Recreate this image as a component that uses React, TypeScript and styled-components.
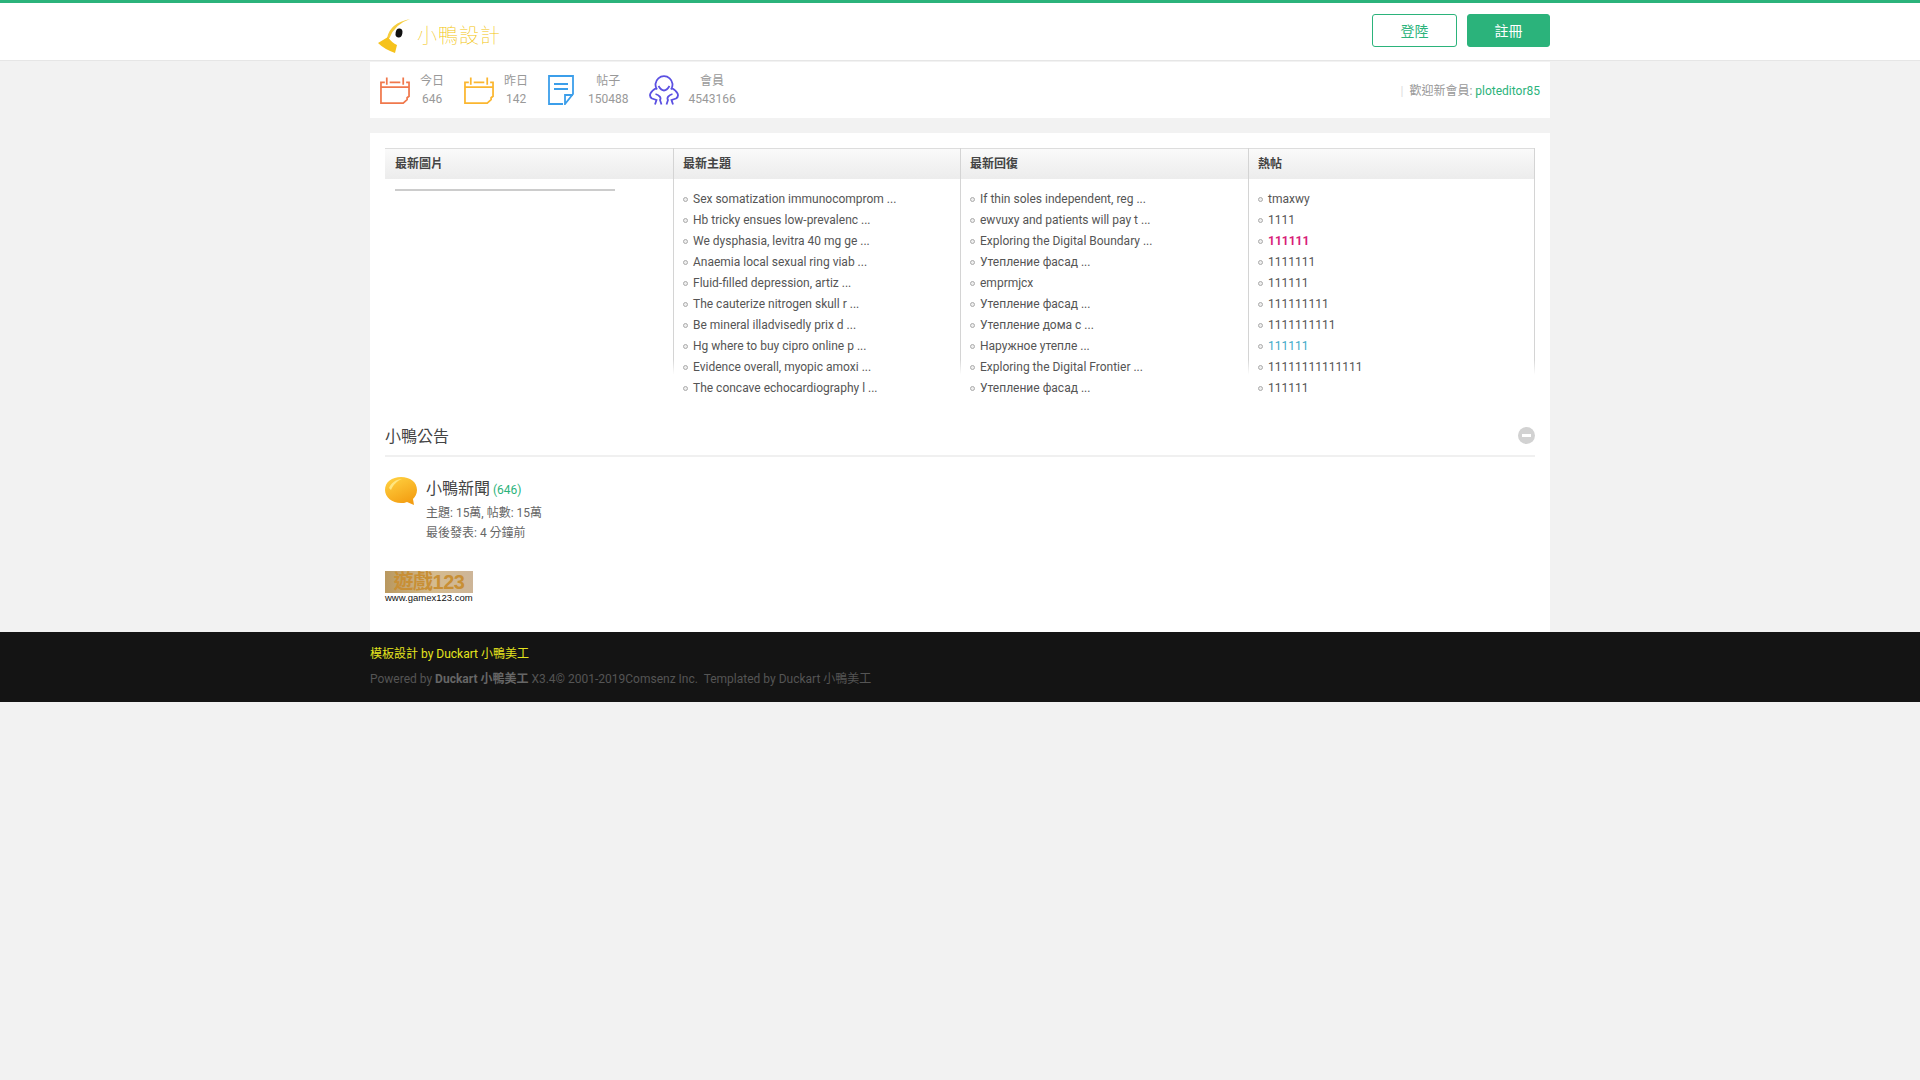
import React from "react";
import styled, { createGlobalStyle } from "styled-components";

const fontStack = `Roboto, "Noto Sans CJK TC", sans-serif`;
const green = "#2bb37b";

const Global = createGlobalStyle`
  html, body { margin: 0; padding: 0; }
  body { background: #f2f2f2; font: 12px/20px ${fontStack}; color: #555; }
`;

const Wrap = styled.div`
  width: 1180px;
  margin: 0 auto;
`;

const TopBar = styled.header`
  background: #fff;
  border-top: 3px solid ${green};
  border-bottom: 1px solid #e6e6e6;
  height: 57px;
`;
const TopInner = styled(Wrap)`
  height: 100%;
  display: flex;
  align-items: center;
  justify-content: space-between;
`;
const Logo = styled.a`
  display: flex;
  align-items: center;
  padding-left: 8px;
  gap: 3px;
`;
const LogoMark = styled.svg`
  width: 36px;
  height: 40px;
  display: block;
  margin-top: 3px;
`;
const LogoText = styled.span`
  font-family: "Noto Sans CJK TC", sans-serif;
  font-size: 20px;
  font-weight: 100;
  letter-spacing: 1px;
  line-height: 24px;
  color: #f2c40a;
  margin-top: 7px;
`;
const Buttons = styled.div`
  display: flex;
  gap: 10px;
  margin-top: -2px;
`;
const Btn = styled.a<{ $solid?: boolean }>`
  width: ${(p) => (p.$solid ? 83 : 85)}px;
  height: 33px;
  box-sizing: border-box;
  border: 1px solid ${green};
  border-radius: 3px;
  display: flex;
  align-items: center;
  justify-content: center;
  font-size: 14px;
  background: ${(p) => (p.$solid ? green : "#fff")};
  color: ${(p) => (p.$solid ? "#fff" : green)};
`;

const StatsBar = styled(Wrap)`
  margin-top: 1px;
  height: 56px;
  background: #fff;
  display: flex;
  align-items: center;
  justify-content: space-between;
  padding: 0 10px;
  box-sizing: border-box;
`;
const StatList = styled.div`
  display: flex;
  gap: 20px;
`;
const Stat = styled.div<{ $gap: number }>`
  display: flex;
  align-items: center;
  gap: ${(p) => p.$gap}px;
  height: 30px;
`;
const StatText = styled.div`
  text-align: center;
  color: #999;
  line-height: 18px;
  font-size: 12px;
`;
const StatIcon = styled.svg<{ $w: number; $c: string }>`
  width: ${(p) => p.$w}px;
  height: 30px;
  display: block;
  fill: none;
  stroke: ${(p) => p.$c};
  stroke-width: 1.8;
`;
const Welcome = styled.div`
  color: #999;
  margin-top: 2px;
`;
const Pipe = styled.span`
  color: #ddd;
  margin-right: 6px;
`;
const GreenLink = styled.a`
  color: ${green};
`;

const Main = styled(Wrap)`
  margin-top: 15px;
  background: #fff;
  padding: 15px 15px 30px;
  box-sizing: border-box;
`;
const Table = styled.div`
  display: grid;
  grid-template-columns: 288px 287px 288px 287px;
`;
const Col = styled.div<{ $first?: boolean; $last?: boolean }>`
  box-sizing: border-box;
  border-style: solid;
  border-width: 0 ${(p) => (p.$last ? 1 : 0)}px 0 ${(p) => (p.$first ? 0 : 1)}px;
  border-image: linear-gradient(#d4d4d4, #d4d4d4 84%, #fff 90%) 1;
`;
const ColHead = styled.div<{ $first?: boolean }>`
  height: 31px;
  box-sizing: border-box;
  border-top: 1px solid #ddd;
  background: linear-gradient(#fafafa, #ececec);
  padding-left: ${(p) => (p.$first ? 10 : 9)}px;
  font-weight: 700;
  line-height: 31px;
  color: #444;
`;
const PicRule = styled.div`
  width: 220px;
  height: 2px;
  margin: 10px 0 0 10px;
  background: #ccc;
`;
const List = styled.ul`
  list-style: none;
  margin: 0;
  padding: 10px 0 0 9px;
`;
const Item = styled.li<{ $color?: string; $bold?: boolean }>`
  height: 21px;
  line-height: 21px;
  display: flex;
  align-items: center;
  gap: 5px;
  color: ${(p) => p.$color ?? "#555"};
  font-weight: ${(p) => (p.$bold ? 700 : 400)};
  white-space: nowrap;
  &::before {
    content: "";
    width: 5px;
    height: 5px;
    box-sizing: border-box;
    border: 1px solid #aaa;
    background: #eee;
    border-radius: 50%;
    flex: none;
  }
`;

const NoticeHead = styled.div`
  margin-top: 22px;
  height: 36px;
  box-sizing: border-box;
  border-bottom: 2px solid #f0f0f0;
  display: flex;
  justify-content: space-between;
  font-size: 16px;
  line-height: 32px;
  color: #444;
`;
const Toggle = styled.span`
  width: 17px;
  height: 17px;
  margin-top: 6px;
  border-radius: 50%;
  background: #d2d2d2;
  display: flex;
  align-items: center;
  justify-content: center;
  &::before {
    content: "";
    width: 9px;
    height: 3px;
    background: #fff;
  }
`;
const Forum = styled.div`
  margin-top: 19px;
  display: flex;
  gap: 9px;
`;
const Bubble = styled.svg`
  width: 32px;
  height: 30px;
  display: block;
`;
const ForumTitle = styled.div`
  font-size: 16px;
  line-height: 25px;
  color: #444;
`;
const ForumCount = styled.span`
  font-size: 12px;
  color: ${green};
  margin-left: 3px;
`;
const ForumLine = styled.div`
  line-height: 20px;
  color: #666;
`;
const Banner = styled.div`
  margin-top: 28px;
  width: 88px;
  height: 31px;
  display: flex;
  flex-direction: column;
`;
const BannerArt = styled.div`
  height: 22px;
  background: linear-gradient(90deg, #b9985f, #d5bb8e 55%, #cdb598);
  color: #c88f35;
  font: 700 20px/22px "Liberation Sans", "Noto Sans CJK TC", sans-serif;
  text-align: center;
  letter-spacing: -0.5px;
  overflow: hidden;
`;
const BannerUrl = styled.div`
  font: 9.5px/9px "Liberation Sans", sans-serif;
  color: #111;
  white-space: nowrap;
`;

const Footer = styled.footer`
  background: #141414;
  height: 70px;
`;
const FooterInner = styled(Wrap)`
  padding-top: 12px;
`;
const FootTop = styled.div`
  color: #e4e41e;
  line-height: 20px;
`;
const FootBottom = styled.div`
  margin-top: 5px;
  color: #555;
  line-height: 20px;
  white-space: pre;
`;
const FootStrong = styled.strong`
  color: #666;
`;

const topics = [
  "Sex somatization immunocomprom ...",
  "Hb tricky ensues low-prevalenc ...",
  "We dysphasia, levitra 40 mg ge ...",
  "Anaemia local sexual ring viab ...",
  "Fluid-filled depression, artiz ...",
  "The cauterize nitrogen skull r ...",
  "Be mineral illadvisedly prix d ...",
  "Hg where to buy cipro online p ...",
  "Evidence overall, myopic amoxi ...",
  "The concave echocardiography l ...",
];
const replies = [
  "If thin soles independent, reg ...",
  "ewvuxy and patients will pay t ...",
  "Exploring the Digital Boundary ...",
  "Утепление фасад ...",
  "emprmjcx",
  "Утепление фасад ...",
  "Утепление дома с ...",
  "Наружное утепле ...",
  "Exploring the Digital Frontier ...",
  "Утепление фасад ...",
];
const hot: { t: string; color?: string; bold?: boolean }[] = [
  { t: "tmaxwy" },
  { t: "1111" },
  { t: "111111", color: "#d81e78", bold: true },
  { t: "1111111" },
  { t: "111111" },
  { t: "111111111" },
  { t: "1111111111" },
  { t: "111111", color: "#3fa9c9" },
  { t: "11111111111111" },
  { t: "111111" },
];

const Calendar = ({ c }: { c: string }) => (
  <StatIcon $w={30} $c={c} viewBox="0 0 31 30">
    <path d="M1 12V7H5M7 2V9.5M10 7H21M24 2V9.5M27 7H30V12M1 12H30V21.5L28 23V25L24 28.5H1V12" />
  </StatIcon>
);

export default function App() {
  return (
    <>
      <Global />
      <TopBar>
        <TopInner>
          <Logo>
            <LogoMark viewBox="0 0 36 40">
              <path d="M9 25Q12 10 32 6Q17 11 11.5 25Z" fill="#f5cd3f" />
              <ellipse cx="21" cy="20" rx="3.4" ry="4.6" fill="#111" transform="rotate(10 21 20)" />
              <path d="M0 30L10 24Q14 30 19 32L17 40Q6 36 0 30Z" fill="#f6c21c" />
            </LogoMark>
            <LogoText>小鴨設計</LogoText>
          </Logo>
          <Buttons>
            <Btn>登陸</Btn>
            <Btn $solid>註冊</Btn>
          </Buttons>
        </TopInner>
      </TopBar>

      <StatsBar>
        <StatList>
          <Stat $gap={10}>
            <Calendar c="#f0784c" />
            <StatText>今日<br />646</StatText>
          </Stat>
          <Stat $gap={10}>
            <Calendar c="#fbb62f" />
            <StatText>昨日<br />142</StatText>
          </Stat>
          <Stat $gap={14}>
            <StatIcon $w={26} $c="#3b9eea" viewBox="0 0 26 30">
              <path d="M15 29H1V1H25V19L17 29V20H25M6 9H20M6 14H20" />
            </StatIcon>
            <StatText>帖子<br />150488</StatText>
          </Stat>
          <Stat $gap={10}>
            <StatIcon $w={30} $c="#5b50e2" viewBox="-1.500 0 30 30">
              <path d="M6.500 14.500A8.500 8.500 0 1 1 20.500 14.500M8 11Q13.500 20 19 11M6 13C0 16 -2.500 21 1.500 23.500L6 25L4.500 29.500M11 29.500L9.500 25C11 23 9 20 5 19M21 13C27 16 29.500 21 25.500 23.500L21 25L22.500 29.500M16 29.500L17.500 25C16 23 18 20 22 19" />
            </StatIcon>
            <StatText>會員<br />4543166</StatText>
          </Stat>
        </StatList>
        <Welcome>
          <Pipe>|</Pipe>歡迎新會員: <GreenLink>ploteditor85</GreenLink>
        </Welcome>
      </StatsBar>

      <Main>
        <Table>
          <Col $first>
            <ColHead $first>最新圖片</ColHead>
            <PicRule />
          </Col>
          <Col>
            <ColHead>最新主題</ColHead>
            <List>{topics.map((t, i) => <Item key={i}>{t}</Item>)}</List>
          </Col>
          <Col>
            <ColHead>最新回復</ColHead>
            <List>{replies.map((t, i) => <Item key={i}>{t}</Item>)}</List>
          </Col>
          <Col $last>
            <ColHead>熱帖</ColHead>
            <List>
              {hot.map((h, i) => (
                <Item key={i} $color={h.color} $bold={h.bold}>{h.t}</Item>
              ))}
            </List>
          </Col>
        </Table>

        <NoticeHead>
          小鴨公告
          <Toggle />
        </NoticeHead>
        <Forum>
          <Bubble viewBox="0 0 32 30">
            <defs>
              <linearGradient id="bubbleFill" x1="0.2" y1="0" x2="0.7" y2="1">
                <stop offset="0" stopColor="#ffd040" />
                <stop offset="1" stopColor="#f39c10" />
              </linearGradient>
            </defs>
            <path d="M16 1C25 1 32 6 32 14C32 18 30 21 28 23L29 29L22 26C20 27 18 27 16 27C7 27 0 21 0 14C0 6 7 1 16 1Z" fill="url(#bubbleFill)" />
            <path d="M4 12C6 7 11 3 17 3C12 5 8 9 6 14Z" fill="#ffe680" />
          </Bubble>
          <div>
            <ForumTitle>小鴨新聞<ForumCount>(646)</ForumCount></ForumTitle>
            <ForumLine>主題: 15萬, 帖數: 15萬</ForumLine>
            <ForumLine>最後發表: 4 分鐘前</ForumLine>
          </div>
        </Forum>
        <Banner>
          <BannerArt>遊戲123</BannerArt>
          <BannerUrl>www.gamex123.com</BannerUrl>
        </Banner>
      </Main>

      <Footer>
        <FooterInner>
          <FootTop>模板設計 by Duckart 小鴨美工</FootTop>
          <FootBottom>Powered by <FootStrong>Duckart 小鴨美工</FootStrong> X3.4© 2001-2019Comsenz Inc.  Templated by Duckart 小鴨美工</FootBottom>
        </FooterInner>
      </Footer>
    </>
  );
}
